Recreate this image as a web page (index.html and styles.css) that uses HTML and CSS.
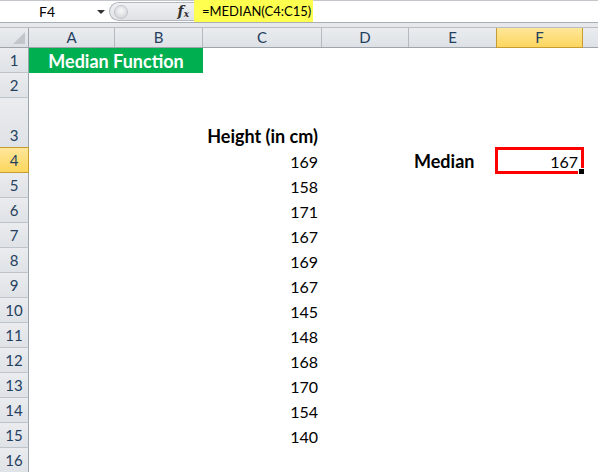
FILE: index.html
```html
<!DOCTYPE html>
<html>
<head>
<meta charset="utf-8">
<link rel="stylesheet" href="styles.css">
</head>
<body>
<div class="fbar">
  <div class="namebox"><span class="ref">F4</span><span class="arrow"></span></div>
  <div class="pill"><span class="knob"></span><span class="fx">f<sub>x</sub></span></div>
  <div class="formula">=MEDIAN(C4:C15)</div>
</div>
<div class="band"></div>
<div class="row hdr">
  <div class="corner"><span class="tri"></span></div>
  <div class="ch">A</div><div class="ch">B</div><div class="ch">C</div><div class="ch">D</div><div class="ch">E</div><div class="ch sel">F</div><div class="ch last"></div>
</div>
<div class="row r25"><div class="rh">1</div><div class="title">Median Function</div></div>
<div class="row r25"><div class="rh">2</div></div>
<div class="row r50"><div class="rh">3</div><div class="c bold">Height (in cm)</div></div>
<div class="row r25"><div class="rh sel">4</div><div class="c">169</div><div class="e bold">Median</div><div class="f"><span class="fval">167</span></div></div>
<div class="row r25"><div class="rh">5</div><div class="c">158</div></div>
<div class="row r25"><div class="rh">6</div><div class="c">171</div></div>
<div class="row r25"><div class="rh">7</div><div class="c">167</div></div>
<div class="row r25"><div class="rh">8</div><div class="c">169</div></div>
<div class="row r25"><div class="rh">9</div><div class="c">167</div></div>
<div class="row r25"><div class="rh">10</div><div class="c">145</div></div>
<div class="row r25"><div class="rh">11</div><div class="c">148</div></div>
<div class="row r25"><div class="rh">12</div><div class="c">168</div></div>
<div class="row r25"><div class="rh">13</div><div class="c">170</div></div>
<div class="row r25"><div class="rh">14</div><div class="c">154</div></div>
<div class="row r25"><div class="rh">15</div><div class="c">140</div></div>
<div class="row r25"><div class="rh">16</div></div>
</body>
</html>
```
FILE: styles.css
```css
* { box-sizing: border-box; }
html, body { margin: 0; padding: 0; background: #fff; overflow: hidden; }
body { width: 598px; height: 472px; font-family: Lato, "Open Sans", sans-serif; color: #000; }

.fbar { height: 23px; display: flex; border-top: 1px solid #c3c7cc; border-bottom: 1px solid #a9aeb5; background: #fff; }
.namebox { width: 109px; display: flex; align-items: center; position: relative; }
.ref { margin-left: 39px; font-size: 14px; color: #000; }
.arrow { position: absolute; left: 97px; top: 9px; width: 0; height: 0; border-left: 4px solid transparent; border-right: 4px solid transparent; border-top: 4px solid #333; }
.pill { width: 85px; height: 19px; margin-top: 1px; border: 1px solid #b3b8be; border-right: none; border-radius: 10px 0 0 10px; background: linear-gradient(#eef0f2, #dfe2e6); display: flex; align-items: center; justify-content: space-between; padding: 0 5px 0 4px; }
.knob { width: 14px; height: 14px; border-radius: 50%; background: radial-gradient(circle at 50% 40%, #f8f9fa, #c9cdd2); border: 1px solid #c1c5ca; }
.fx { font-family: "DejaVu Serif", serif; font-style: italic; font-size: 14px; font-weight: bold; color: #333; line-height: 1; }
.fx sub { font-size: 9px; vertical-align: -1px; }
.formula { background: #ffff4f; width: 119px; margin-top: -1px; height: 22px; padding-left: 8px; font-size: 13px; display: flex; align-items: center; }

.band { height: 4px; background: #e6e8eb; }

.row { display: grid; grid-template-columns: 29px 86px 88px 119px 87px 88px 86px 1fr; }
.hdr { height: 21px; background: linear-gradient(#eaecef, #dde1e6); border-top: 1px solid #b8bdc3; border-bottom: 1px solid #9ea4ab; }
.corner { border-right: 1px solid #9ea4ab; position: relative; }
.tri { position: absolute; right: 3px; bottom: 3px; width: 0; height: 0; border-left: 12px solid transparent; border-bottom: 12px solid #c3c7cc; }
.ch { border-right: 1px solid #b4b9bf; text-align: center; font-size: 15px; line-height: 19px; color: #24405f; }
.ch.sel { background: linear-gradient(#ffe79a, #fcd65e); border: 1px solid #c79c35; border-top: none; margin-left: -1px; margin-bottom: -1px; }
.ch.last { border-right: none; }

.r25 { height: 25px; }
.r50 { height: 50px; }
.rh { grid-column: 1; background: linear-gradient(#eaecef, #dfe2e6); border-right: 1px solid #9ea4ab; border-bottom: 1px solid #bfc4ca; font-size: 15px; color: #24405f; text-align: center; display: flex; align-items: flex-end; justify-content: center; padding-bottom: 3px; }
.rh.sel { background: linear-gradient(#ffe79a, #fcd65e); border-right: 1px solid #c79c35; border-bottom: 1px solid #c79c35; margin-top: -1px; border-top: 1px solid #c79c35; }

.title { grid-column: 2 / 4; background: #00b050; color: #fff; font-weight: bold; font-size: 18px; display: flex; align-items: center; justify-content: center; }
.c { grid-column: 4; font-size: 16px; text-align: right; padding-right: 4px; display: flex; align-items: flex-end; justify-content: flex-end; padding-bottom: 2px; }
.e { grid-column: 6; font-size: 16px; display: flex; align-items: flex-end; padding-left: 5px; padding-bottom: 2px; }
.c.bold, .e.bold { font-weight: bold; font-size: 18px; padding-bottom: 1px; }
.f { grid-column: 7; position: relative; display: flex; align-items: flex-end; justify-content: flex-end; padding-right: 5px; padding-bottom: 2px; font-size: 16px; }
.f::before { content: ""; position: absolute; left: -2px; top: -1px; right: -1px; bottom: -1px; border: 3px solid #f00; }
.f::after { content: ""; position: absolute; right: -2px; bottom: -2px; width: 5px; height: 5px; background: #000; border: 1px solid #fff; }
.fval { position: relative; }
```
